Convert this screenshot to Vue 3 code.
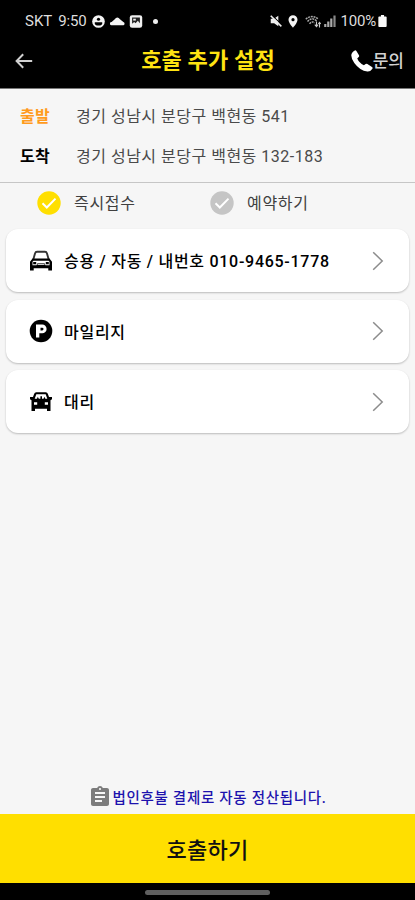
<script setup>
const trip = [
  { label: '출발', address: '경기 성남시 분당구 백현동 541', accent: true },
  { label: '도착', address: '경기 성남시 분당구 백현동 132-183', accent: false },
]

const modes = [
  { label: '즉시접수', active: true },
  { label: '예약하기', active: false },
]

const options = [
  { icon: 'car', label: '승용 / 자동 / 내번호 010-9465-1778' },
  { icon: 'parking', label: '마일리지' },
  { icon: 'driver', label: '대리' },
]
</script>

<template>
  <div class="screen">
    <div class="status">
      <span class="carrier">SKT</span>
      <span class="clock">9:50</span>
      <svg class="s-face" viewBox="0 0 14 14">
        <circle cx="7" cy="7" r="6.8" fill="#f4f4f4" />
        <circle cx="7" cy="4.600" r="1.700" fill="#000" />
        <path d="M3 7.800h8v1a4 2.600 0 0 1-8 0z" fill="#000" />
      </svg>
      <svg class="s-cloud" viewBox="0 0 15 10">
        <path d="M1.500 9.200A1.600 1.600 0 0 1 1.600 6L4.500 3.500Q7.300-.5 10 3.200L13.300 6A1.700 1.700 0 0 1 13.500 9.200z" fill="#f4f4f4" />
      </svg>
      <svg class="s-photo" viewBox="0 0 14 14">
        <rect x=".3" y=".3" width="13.400" height="13.400" rx="2.500" fill="#f0f0f0" />
        <path d="M2.800 2.800h8.400v6L9 6.300 6.500 9 5 7.500 2.800 9.500z" fill="#222" />
        <rect x="4" y="4" width="2.800" height="2" fill="#f0f0f0" />
      </svg>
      <span class="s-dot"></span>
      <span class="grow"></span>
      <svg class="s-mute" viewBox="0 0 13 13">
        <path d="M.8 4h3.500L9 .8v11.400L4.500 9H.8z" fill="#eee" />
        <path d="M1.500-.2l11.500 11" stroke="#000" stroke-width="1.200" />
        <path d="M.8 .8l11.500 11.500" stroke="#eee" stroke-width="1.700" />
      </svg>
      <svg class="s-pin" viewBox="0 0 10 13">
        <path d="M5 .3A4.500 4.500 0 0 0 .5 4.800C.5 8 5 12.700 5 12.700S9.500 8 9.500 4.800A4.500 4.500 0 0 0 5 .3z" fill="#f4f4f4" />
        <circle cx="5" cy="4.700" r="1.600" fill="#000" />
      </svg>
      <svg class="s-wifi" viewBox="0 0 16 13">
        <path d="M.8 4.200Q7-1 13.500 4.200M2.500 6.500Q7 1.500 11.500 6M4.500 8.800Q7 5.500 9.500 8" fill="none" stroke="#aaa" stroke-width="1.500" stroke-dasharray="2 .8" />
        <path d="M11.500 6.500v5M9.800 9.700l1.700 2 1.500-2M14.500 12.500v-5M13.300 9l1.200-1.500L15.700 9" fill="none" stroke="#ccc" stroke-width="1.100" />
      </svg>
      <svg class="s-signal" viewBox="0 0 12 12">
        <path d="M1.300 12V9M4.300 12V6.500M7.300 12V3.500" stroke="#aaa" stroke-width="2.200" />
        <path d="M10.500 12V.5" stroke="#888" stroke-width="2.200" />
      </svg>
      <span class="percent">100%</span>
      <svg class="s-battery" viewBox="0 0 9 13">
        <path d="M2.800 0h3.400v1.500H8a1 1 0 0 1 1 1V12a1 1 0 0 1-1 1H1a1 1 0 0 1-1-1V2.500a1 1 0 0 1 1-1h1.800z" fill="#f8f8f8" />
      </svg>
    </div>

    <header class="bar">
      <svg class="back" viewBox="0 0 18 16">
        <path d="M8.200 1.200 1.600 8l6.600 6.800M1.600 8h15.600" fill="none" stroke="#d0d0d0" stroke-width="2" />
      </svg>
      <h1 class="title">호출 추가 설정</h1>
      <div class="contact">
        <svg class="phone" viewBox="0 0 22 22">
          <path d="M3.800.4Q4.700-.1 5.400.9L8 5.200Q8.500 6.200 7.700 7L6.200 8.400Q8 12.600 12.900 15.300L14.600 14.100Q15.500 13.500 16.400 14.100L21 17Q22 17.700 21.400 18.700 19.500 21.800 16.300 21.500 9 20.800 3.300 13 .3 8.800.3 5.500.2 2.500 3.800.4z" fill="#fff" />
        </svg>
        <span class="contact-text">문의</span>
      </div>
    </header>

    <section class="trip">
      <div v-for="row in trip" :key="row.label" class="trip-row">
        <span class="trip-label" :class="{ accent: row.accent }">{{ row.label }}</span>
        <span class="trip-address">{{ row.address }}</span>
      </div>
    </section>

    <div class="modes">
      <div v-for="mode in modes" :key="mode.label" class="mode">
        <svg class="check" :class="{ active: mode.active }" viewBox="0 0 24 24">
          <circle cx="12" cy="12" r="11.700" />
          <path d="M5.500 12.300l4.300 4.200 8.700-8.900" fill="none" stroke="#fff" stroke-width="2" />
        </svg>
        <span class="mode-text">{{ mode.label }}</span>
      </div>
    </div>

    <main class="cards">
      <div v-for="item in options" :key="item.label" class="card">
        <svg v-if="item.icon === 'car'" class="icon" viewBox="0 0 24 24">
          <path d="M4.300 10.500 6 4.500Q6.500 2.800 8 2.800h8q1.500 0 2 1.700l1.700 6" fill="none" stroke="#333" stroke-width="1.900" />
          <path fill-rule="evenodd" d="M3.500 9.500h17L23 12.800V21.500h-3.700v-2.300H4.700v2.300H1V12.800zM3.500 12.800v3.500h4l1-2h7l1 2h4v-3.500l-1-1H4.500z" />
          <path d="M4.200 13h3v2.300h-3zM16.800 13h3v2.300h-3z" />
          <path d="M8.500 15.300h7" stroke="#fff" stroke-width="1" />
        </svg>
        <svg v-else-if="item.icon === 'parking'" class="icon" viewBox="0 0 24 24">
          <circle cx="12" cy="12" r="11.300" />
          <path fill="#fff" fill-rule="evenodd" d="M7 5.500h6.200a4.400 4.400 0 0 1 0 8.800h-2.900V18.500H7zm4.500 3.300v2.600h1.700a1.300 1.300 0 0 0 0-2.600z" />
        </svg>
        <svg v-else class="icon" viewBox="0 0 24 24">
          <path d="M1 7h3l1.200-3.300Q5.700 2.200 7.200 2.200h9.600q1.500 0 2 1.500L20 7h3v2.300l-1.500 1V21H18v-2.300H6V21H2.500V10.300L1 9.300z" />
          <path d="M7.300 4.200h9.400l1.600 4.600h-2L15.500 6.800l-1 2h-1.500V6.300h-1.600v2.500H9.800l-1-2-.8 2H5.700z" fill="#fff" />
          <path d="M5 12.300h3.200v2.500H5zM15.800 12.300H19v2.500h-3.200z" fill="#fff" />
        </svg>
        <span class="card-text">{{ item.label }}</span>
        <svg class="chevron" viewBox="0 0 12 20">
          <path d="M1.200 1.200 10.200 10l-9 8.800" fill="none" stroke="#8c8c8c" stroke-width="1.500" />
        </svg>
      </div>
    </main>

    <div class="notice">
      <svg class="clip" viewBox="3 1 18 20">
        <path fill="#7c7c7c" fill-rule="evenodd" d="M19 3h-4.180C14.400 1.840 13.300 1 12 1s-2.400.84-2.820 2H5c-1.100 0-2 .9-2 2v14c0 1.100.9 2 2 2h14c1.100 0 2-.9 2-2V5c0-1.100-.9-2-2-2zm-7 0c.55 0 1 .45 1 1s-.45 1-1 1-1-.45-1-1 .45-1 1-1zm2 14H7v-2h7v2zm3-4H7v-2h10v2zm0-4H7V7h10v2z" />
      </svg>
      <span class="notice-text">법인후불 결제로 자동 정산됩니다.</span>
    </div>

    <button class="call"><span class="call-text">호출하기</span></button>
    <div class="nav"><span class="handle"></span></div>
  </div>
</template>

<style>
body {
  margin: 0;
}
</style>

<style scoped>
.screen {
  display: flex;
  flex-direction: column;
  box-sizing: border-box;
  width: 415px;
  height: 900px;
  overflow: hidden;
  background: #f6f6f6;
  font-family: Roboto, "Noto Sans CJK KR", sans-serif;
  color: #000;
  white-space: nowrap;
}
svg {
  display: block;
  flex: none;
}
.status {
  display: flex;
  align-items: center;
  box-sizing: border-box;
  height: 42px;
  padding: 0 28px 0 25px;
  background: #000;
  color: #dedede;
  font-size: 15px;
  line-height: 20px;
}
.clock {
  margin-left: 6px;
  letter-spacing: -0.2px;
}
.s-face { width: 13px; height: 13px; margin-left: 6px; }
.s-cloud { width: 15px; height: 10px; margin-left: 5px; }
.s-photo { width: 14px; height: 13px; margin-left: 4px; }
.s-dot {
  width: 5px;
  height: 5px;
  margin-left: 10px;
  border-radius: 50%;
  background: #eee;
}
.grow { flex: 1; }
.s-mute { width: 12px; height: 12px; margin-right: 6px; }
.s-pin { width: 10px; height: 13px; margin-right: 7px; }
.s-wifi { width: 16px; height: 13px; margin-right: 3px; }
.s-signal { width: 12px; height: 12px; margin-right: 5px; }
.percent { letter-spacing: -0.2px; margin-right: 2px; }
.s-battery { width: 9px; height: 12px; }
.bar {
  display: grid;
  grid-template-columns: 1fr auto 1fr;
  align-items: center;
  box-sizing: border-box;
  height: 47px;
  padding: 0 11px 8px 15px;
  background: #000;
  border-bottom: 1px solid #777;
}
.back { width: 18px; height: 16px; }
.title {
  margin: 0;
  padding-right: 3px;
  color: #ffe312;
  font-size: 22px;
  font-weight: 700;
  line-height: 32px;
  letter-spacing: 0.15px;
}
.contact {
  display: flex;
  align-items: center;
  justify-content: flex-end;
}
.phone { width: 22px; height: 22px; }
.contact-text {
  color: #d2d2d2;
  font-size: 17px;
  font-weight: 500;
  line-height: 24px;
}
.trip {
  display: flex;
  flex-direction: column;
  box-sizing: border-box;
  height: 94px;
  padding: 6px 20px 0;
  border-bottom: 1px solid #c6c6c6;
}
.trip-row {
  display: flex;
  align-items: center;
  height: 40px;
}
.trip-label {
  width: 56px;
  font-size: 16px;
  font-weight: 700;
  letter-spacing: 0.3px;
}
.trip-label.accent { color: #ff9b1e; }
.trip-address {
  color: #4a4a4a;
  font-size: 16px;
  font-weight: 400;
  letter-spacing: 0.5px;
}
.modes {
  display: flex;
  height: 39px;
  padding-left: 37px;
}
.mode {
  display: flex;
  align-items: center;
  width: 173px;
}
.check {
  width: 24px;
  height: 24px;
  fill: #c5c5c5;
}
.check.active { fill: #ffdf00; }
.mode-text {
  margin-left: 13px;
  padding-bottom: 2px;
  color: #404040;
  font-size: 16px;
  letter-spacing: 0.7px;
}
.cards {
  display: flex;
  flex: 1;
  flex-direction: column;
  gap: 7.500px;
  padding: 7px 6px 0;
}
.card {
  display: flex;
  align-items: center;
  box-sizing: border-box;
  height: 63px;
  padding: 0 25px 0 23px;
  border-radius: 12px;
  background: #fff;
  box-shadow: 0 1px 2px rgba(0, 0, 0, 0.24);
}
.icon { width: 24px; height: 24px; }
.card-text {
  flex: 1;
  margin-left: 11px;
  padding-bottom: 1px;
  font-size: 16px;
  font-weight: 500;
  letter-spacing: 0.72px;
}
.chevron { width: 12px; height: 20px; }
.notice {
  display: flex;
  align-items: center;
  justify-content: center;
  height: 36px;
  padding-left: 3px;
}
.clip { width: 18px; height: 20px; margin-right: 3px; }
.notice-text {
  color: #1d12ae;
  font-size: 14.500px;
  font-weight: 500;
  letter-spacing: 0.7px;
}
.call {
  height: 69px;
  padding: 0 0 2px;
  border: 0;
  background: #ffdf00;
  color: #111;
  font-family: inherit;
  font-size: 22px;
  font-weight: 500;
  letter-spacing: 0.3px;
}
.nav {
  display: flex;
  justify-content: center;
  box-sizing: border-box;
  height: 17px;
  padding-top: 7px;
  background: #000;
}
.handle {
  width: 125px;
  height: 5px;
  border-radius: 3px;
  background: #5f5f5f;
}
</style>
